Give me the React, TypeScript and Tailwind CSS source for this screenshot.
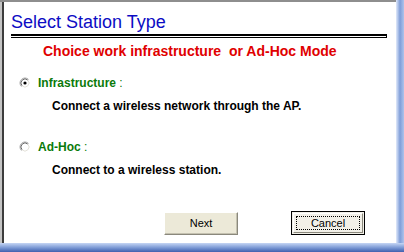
import React from "react";

function Radio({ checked }: { checked: boolean }) {
  return (
    <svg width="12" height="12" viewBox="0 0 12 12" className="shrink-0">
      <circle cx="6" cy="6" r="5" fill="#ffffff" />
      <path d="M2.46 9.54 A5 5 0 0 1 9.54 2.46" fill="none" stroke="#a8a8a8" strokeWidth="1" />
      <path d="M3.17 8.83 A4 4 0 0 1 8.83 3.17" fill="none" stroke="#6a6a6a" strokeWidth="1" />
      <path d="M8.83 3.17 A4 4 0 0 1 3.17 8.83" fill="none" stroke="#e4e2da" strokeWidth="1" />
      {checked && <circle cx="6" cy="6" r="1.6" fill="#000000" />}
    </svg>
  );
}

export default function App() {
  const font = { fontFamily: '"Liberation Sans", Arial, sans-serif' };
  return (
    <div className="w-[404px] h-[252px] flex flex-col overflow-hidden bg-white" style={font}>
      <div className="flex flex-1 min-h-0">
        <div className="flex-1 flex flex-col min-w-0">
          <div className="h-[2px] bg-[#8e8e8e]" />
          <div className="flex flex-1 min-h-0">
            <div className="w-[2px] bg-[#c4c4c4]" />
            <div className="w-[2px] bg-[#3c3c3c]" />
            <div className="flex-1 bg-white flex flex-col">
              <div className="mt-[10px] pl-[7px] text-[18px] leading-[20px] text-[#0c0cc4]">
                Select Station Type
              </div>
              <div className="mt-[2px] ml-[7px] w-[376px] h-[4px] border-t-2 border-b border-r border-black" />
              <div className="mt-[5px] pl-[39px] text-[14px] leading-[16px] font-bold text-[#e00000] whitespace-pre">
                {"Choice work infrastructure  or Ad-Hoc Mode"}
              </div>
              <div className="mt-[17px] pl-[15px] flex items-center gap-[7px] h-[14px]">
                <Radio checked />
                <span className="text-[12px] leading-[14px] font-bold text-[#0a7a0a]">
                  Infrastructure <span className="font-normal">:</span>
                </span>
              </div>
              <div className="mt-[9px] pl-[48px] text-[12px] leading-[14px] font-bold text-black">
                Connect a wireless network through the AP.
              </div>
              <div className="mt-[27px] pl-[15px] flex items-center gap-[7px] h-[14px]">
                <Radio checked={false} />
                <span className="text-[12px] leading-[14px] font-bold text-[#0a7a0a]">
                  Ad-Hoc <span className="font-normal">:</span>
                </span>
              </div>
              <div className="mt-[9px] pl-[48px] text-[12px] leading-[14px] font-bold text-black">
                Connect to a wireless station.
              </div>
              <div className="mt-[34px] flex items-start">
                <div className="ml-[160px] mt-[1px] w-[74px] h-[23px] flex items-center justify-center bg-[#ece9d8] border border-t-white border-l-white border-r-[#8a887c] border-b-[#8a887c] shadow-[inset_-1px_-1px_0_#c4c1b0] text-[11px] text-black">
                  Next
                </div>
                <div className="ml-[53px] w-[74px] h-[24px] border border-black bg-[#f2f0e8] p-[1px]">
                  <div className="w-full h-full border border-t-white border-l-white border-r-[#8a887c] border-b-[#8a887c] p-[2px]">
                    <div className="w-full h-full border border-dotted border-black flex items-center justify-center text-[11px] text-black">
                      Cancel
                    </div>
                  </div>
                </div>
              </div>
            </div>
          </div>
        </div>
        <div className="w-[8px] bg-gradient-to-r from-[#e2eafa] via-[#7f9dd8] to-[#aec3ec]" />
      </div>
      <div className="h-[9px] bg-gradient-to-b from-[#c6d6f4] via-[#7f9cd6] to-[#3f5fae]" />
    </div>
  );
}
